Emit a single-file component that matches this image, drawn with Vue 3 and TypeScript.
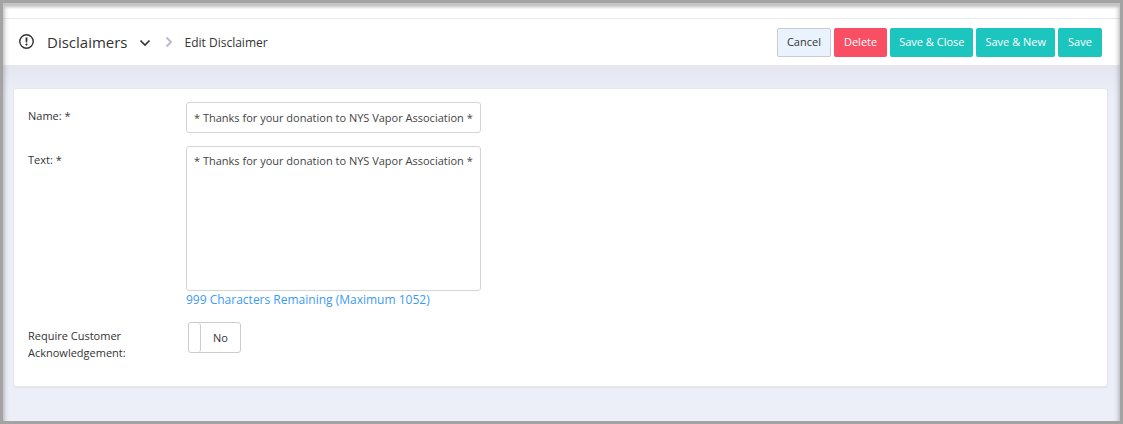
<script setup lang="ts">
import { computed, ref } from 'vue'

interface Action {
  label: string
  kind: 'plain' | 'danger' | 'primary'
}

const actions: Action[] = [
  { label: 'Cancel', kind: 'plain' },
  { label: 'Delete', kind: 'danger' },
  { label: 'Save & Close', kind: 'primary' },
  { label: 'Save & New', kind: 'primary' },
  { label: 'Save', kind: 'primary' },
]

const maximum = 1052
const name = ref('* Thanks for your donation to NYS Vapor Association *')
const text = ref('* Thanks for your donation to NYS Vapor Association *')
const acknowledge = ref(false)
const remaining = computed(() => maximum - text.value.length)
</script>

<template>
  <div class="page">
    <div class="topbar"></div>
    <header class="header">
      <svg class="alert" viewBox="0 0 16 16" aria-hidden="true">
        <circle cx="7.5" cy="7.5" r="6.7" fill="none" stroke="currentColor" stroke-width="1.4" />
        <path d="M6.500 3.500h2l-.3 5h-1.400z" fill="currentColor" />
        <circle cx="7.5" cy="10.600" r="1.100" fill="currentColor" />
      </svg>
      <button type="button" class="section">
        Disclaimers
        <svg class="caret" viewBox="0 0 12 8" aria-hidden="true">
          <path d="M1.500 1.500 6 6l4.500-4.500" fill="none" stroke="currentColor" stroke-width="1.600" />
        </svg>
      </button>
      <svg class="crumb" viewBox="0 0 8 12" aria-hidden="true">
        <path d="M1.500 1.500 6 6l-4.500 4.500" fill="none" stroke="currentColor" stroke-width="2" />
      </svg>
      <h1 class="title">Edit Disclaimer</h1>
      <div class="actions">
        <button v-for="a in actions" :key="a.label" type="button" class="btn" :class="a.kind">{{ a.label }}</button>
      </div>
    </header>
    <main class="content">
      <form class="card" @submit.prevent>
        <label class="label" for="name">Name: *</label>
        <input id="name" v-model="name" class="field" type="text" />
        <label class="label" for="text">Text: *</label>
        <div class="stack">
          <textarea id="text" v-model="text" class="field area"></textarea>
          <p class="hint">{{ remaining }} Characters Remaining (Maximum {{ maximum }})</p>
        </div>
        <label class="label" for="ack">Require Customer Acknowledgement:</label>
        <label class="toggle">
          <input id="ack" v-model="acknowledge" class="check" type="checkbox" />
          <span class="knob"></span>
          <span class="state">{{ acknowledge ? 'Yes' : 'No' }}</span>
        </label>
      </form>
    </main>
    <div class="frame"></div>
  </div>
</template>

<style>
body {
  background: #eceff8;
}
</style>

<style scoped>
.page,
.page * {
  box-sizing: border-box;
}
.page {
  position: relative;
  display: flex;
  flex-direction: column;
  min-height: 100vh;
  padding: 3px;
  background: #eceff8;
  color: #333;
  font-family: "Open Sans", sans-serif;
  font-size: 11px;
}
.frame {
  position: absolute;
  inset: 0;
  pointer-events: none;
  border: 3px solid #a3a3a3;
}
.frame::after {
  content: "";
  position: absolute;
  inset: 0 0 -8px;
  clip-path: inset(0 0 8px);
  box-shadow: inset 0 4px 3px #c4c4c4, inset 0 0 5px 1px rgba(110, 110, 125, 0.5);
}
.topbar {
  height: 16px;
  background: #fff;
  border-bottom: 1px solid #e9e9e9;
}
.header {
  display: flex;
  align-items: center;
  height: 46px;
  padding: 0 18px 0 16px;
  background: #fff;
}
.alert {
  width: 16px;
  height: 16px;
}
.section {
  display: flex;
  align-items: center;
  margin-left: 12px;
  padding: 0;
  border: 0;
  background: none;
  color: #333;
  font: 15px/22px "Open Sans", sans-serif;
}
.caret {
  width: 12px;
  height: 8px;
  margin: 2px 0 0 11px;
}
.crumb {
  width: 8px;
  height: 12px;
  margin: 0 12px 0 14px;
  color: #bcbac9;
}
.title {
  margin: 0;
  font-size: 12px;
  font-weight: 400;
}
.actions {
  display: flex;
  gap: 3px;
  margin-left: auto;
}
.btn {
  min-width: 44px;
  height: 29px;
  padding: 0 8px;
  border: 1px solid transparent;
  border-radius: 2px;
  color: #fff;
  font: 11px/16px "Open Sans", sans-serif;
  white-space: nowrap;
}
.plain {
  padding: 0 9px;
  border-color: #c8cbd0;
  background: #e9f3fd;
  color: #333;
}
.danger {
  padding: 0 9px;
  background: #f84f64;
}
.primary {
  background: #1dc5bf;
}
.content {
  flex: 1;
  padding: 23px 12px 32px 10px;
  background: linear-gradient(#e5e6f0, #eceff8 32px);
}
.card {
  display: grid;
  grid-template-columns: 118px minmax(0, 295px);
  column-gap: 40px;
  row-gap: 13px;
  align-items: start;
  padding: 13px 14px 25px;
  background: #fff;
  border: 1px solid #e4e7ee;
  border-radius: 3px;
  box-shadow: 0 1px 1px #e0e2e9;
}
.label {
  padding-top: 5px;
  line-height: 17px;
}
.field {
  display: block;
  width: 100%;
  height: 31px;
  margin: 0;
  padding: 0 7px;
  border: 1px solid #d5d5d5;
  border-radius: 3px;
  background: #fff;
  color: #444;
  font: 11px/17px "Open Sans", sans-serif;
}
.area {
  height: 145px;
  padding: 5px 0 5px 7px;
  resize: none;
}
.hint {
  margin: 0;
  color: #3c9bf5;
  font-size: 12px;
  line-height: 18px;
}
.toggle {
  position: relative;
  display: flex;
  width: 53px;
  height: 31px;
  margin-left: 2px;
  overflow: hidden;
  border: 1px solid #ccc;
  border-radius: 3px;
  background: #fff;
}
.check {
  position: absolute;
  inset: 0;
  margin: 0;
  opacity: 0;
}
.knob {
  width: 12px;
  border-right: 1px solid #ccc;
  border-radius: 3px;
}
.state {
  flex: 1;
  line-height: 30px;
  text-align: center;
}
</style>
